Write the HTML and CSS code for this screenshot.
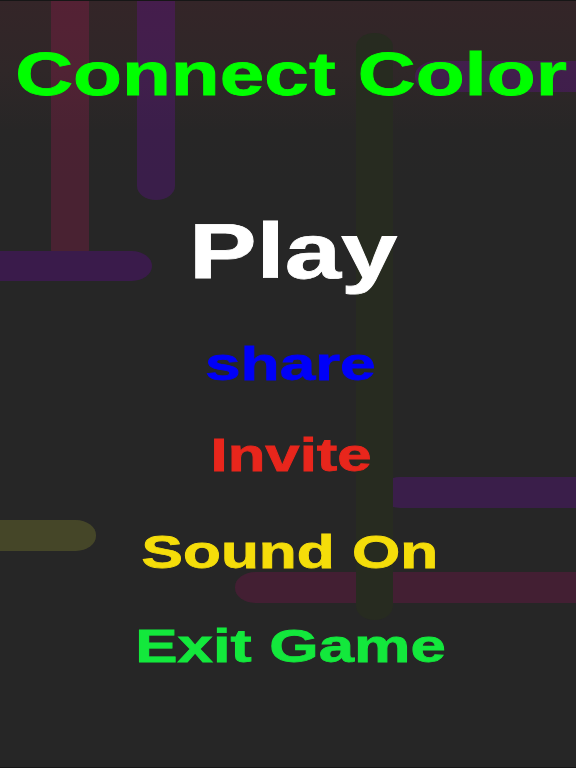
FILE: index.html
```html
<!DOCTYPE html>
<html lang="en">
<head>
<meta charset="utf-8">
<title>Connect Color</title>
<link rel="stylesheet" href="styles.css">
</head>
<body>
<div class="screen">
  <svg class="board" viewBox="0 0 576 768" width="576" height="768" aria-hidden="true">
    <rect class="pipe red" x="51" y="-40" width="38" height="304" rx="19" ry="14"/>
    <rect class="pipe purple" x="137" y="-40" width="38" height="240" rx="19" ry="14"/>
    <rect class="pipe purple-solid" x="-40" y="251" width="192" height="30" rx="20" ry="15"/>
    <rect class="pipe purple" x="415" y="61" width="220" height="31" rx="20" ry="15"/>
    <rect class="pipe purple" x="380" y="477" width="260" height="31" rx="20" ry="15"/>
    <rect class="pipe olive" x="-40" y="520" width="136" height="31" rx="20" ry="15"/>
    <rect class="pipe maroon" x="235" y="572" width="400" height="31" rx="20" ry="15"/>
    <rect class="pipe green" x="356" y="33" width="37" height="587" rx="19" ry="14"/>
  </svg>
  <main class="menu">
    <h1 class="title">Connect Color</h1>
    <div class="play">Play</div>
    <ul class="options">
      <li class="opt share">share</li>
      <li class="opt invite">Invite</li>
      <li class="opt sound">Sound On</li>
      <li class="opt exit">Exit Game</li>
    </ul>
  </main>
</div>
</body>
</html>
```
FILE: styles.css
```css
html, body {
  margin: 0;
  padding: 0;
  background: #262626;
}

.screen {
  position: relative;
  width: 576px;
  height: 768px;
  overflow: hidden;
  box-sizing: border-box;
  border-top: 1px solid #161616;
  border-bottom: 1px solid #161616;
  background: linear-gradient(to bottom, #342528 0px, #2f2728 70px, #272626 130px, #262626 180px);
  font-family: "Liberation Sans", Arial, sans-serif;
  font-weight: bold;
}

.board {
  position: absolute;
  left: 0;
  top: -1px;
  display: block;
}

.pipe.red { fill: rgba(215, 20, 100, 0.2); }
.pipe.purple { fill: rgba(138, 0, 218, 0.2); }
.pipe.purple-solid { fill: #3a1b4b; }
.pipe.olive { fill: rgba(193, 198, 48, 0.2); }
.pipe.maroon { fill: rgba(183, 3, 103, 0.2); }
.pipe.green { fill: #272b20; }

.menu {
  position: relative;
  display: flex;
  flex-direction: column;
  align-items: center;
  padding: 41.5px 0 0 4px;
}

.title, .play, .opt {
  -webkit-text-stroke: 0.8px currentColor;
}

.title {
  margin: 0;
  font-size: 62px;
  line-height: 62px;
  color: #00ff00;
  font-weight: bold;
  white-space: nowrap;
  transform: translateX(1.5px) scaleX(1.292);
}

.play {
  margin-top: 108px;
  font-size: 77px;
  line-height: 77px;
  color: #ffffff;
  transform: translateX(3px) scaleX(1.315);
}

.options {
  list-style: none;
  margin: 51px 0 0 0;
  padding: 0;
  display: flex;
  flex-direction: column;
  align-items: center;
  gap: 48px;
}

.opt {
  font-size: 46px;
  line-height: 46px;
  white-space: nowrap;
}

.share { color: #0000f8; transform: scaleX(1.39); }
.invite { color: #e8261c; transform: translateX(1px) scaleX(1.34); margin-top: -3px; }
.sound { color: #f5dd0a; transform: scaleX(1.35); margin-top: 3px; }
.exit { color: #13e83c; transform: scaleX(1.38); }
```
